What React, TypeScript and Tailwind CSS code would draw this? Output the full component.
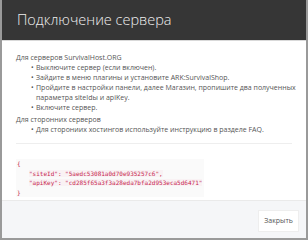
import React from 'react';

const steps = [
  'Выключите сервер (если включен).',
  'Зайдите в меню плагины и установите ARK:SurvivalShop.',
  'Пройдите в настройки панели, далее Магазин, пропишите два полученных параметра siteIdы и apiKey.',
  'Включите сервер.',
];

const App: React.FC = () => {
  return (
    <div className="w-[308px] h-[240px] bg-white border-x-2 border-b-2 border-[#9a9a9a] flex flex-col font-['Open_Sans',sans-serif] overflow-hidden">
      <div className="h-[41px] shrink-0 bg-[#363636] px-[15px] flex items-center border-b border-[#d9d9d9]">
        <h1 className="text-[14.5px] font-light text-[#eeeeee] leading-none">Подключение сервера</h1>
      </div>

      <div className="flex-1 px-[14px] pt-[12px] text-[7px] leading-[10px] text-[#555]">
        <p>Для серверов SurvivalHost.ORG</p>
        <ul className="pl-[15px] -mr-[6px]">
          {steps.map((s) => (
            <li key={s} className="flex">
              <span className="w-[5px] shrink-0">•</span>
              <span>{s}</span>
            </li>
          ))}
        </ul>
        <p className="mt-[2px]">Для сторонних серверов</p>
        <ul className="pl-[15px]">
          <li className="flex">
            <span className="w-[5px] shrink-0">•</span>
            <span>Для сторониих хостингов используйте инструкцию в разделе FAQ.</span>
          </li>
        </ul>

        <div className="border-t border-[#eeeeee] mt-[8px] pt-[15px]">
          <pre className="font-['DejaVu_Sans_Mono',monospace] text-[6px] leading-[9.5px] text-[#c7254e] bg-[#fafafa] w-fit pr-[2px]">
            <span className="block pl-[1px]">{'{'}</span>
            <span className="block pl-[13px]"><span className="bg-[#f9f2f4]">"siteId": "5aedc53081a0d70e935257c6",</span></span>
            <span className="block pl-[13px]"><span className="bg-[#f9f2f4]">"apiKey": "cd285f65a3f3a28eda7bfa2d953eca5d6471"</span></span>
            <span className="block pl-[1px]">{'}'}</span>
          </pre>
        </div>
      </div>

      <div className="h-[38px] shrink-0 bg-[#f5f6f8] border-t border-[#eaeaea] flex items-center justify-end pr-[7px]">
        <button className="h-[22px] w-[41px] mt-[3px] bg-white text-[7px] text-[#555] border border-[#eeeeee]">Закрыть</button>
      </div>
    </div>
  );
};

export default App;
